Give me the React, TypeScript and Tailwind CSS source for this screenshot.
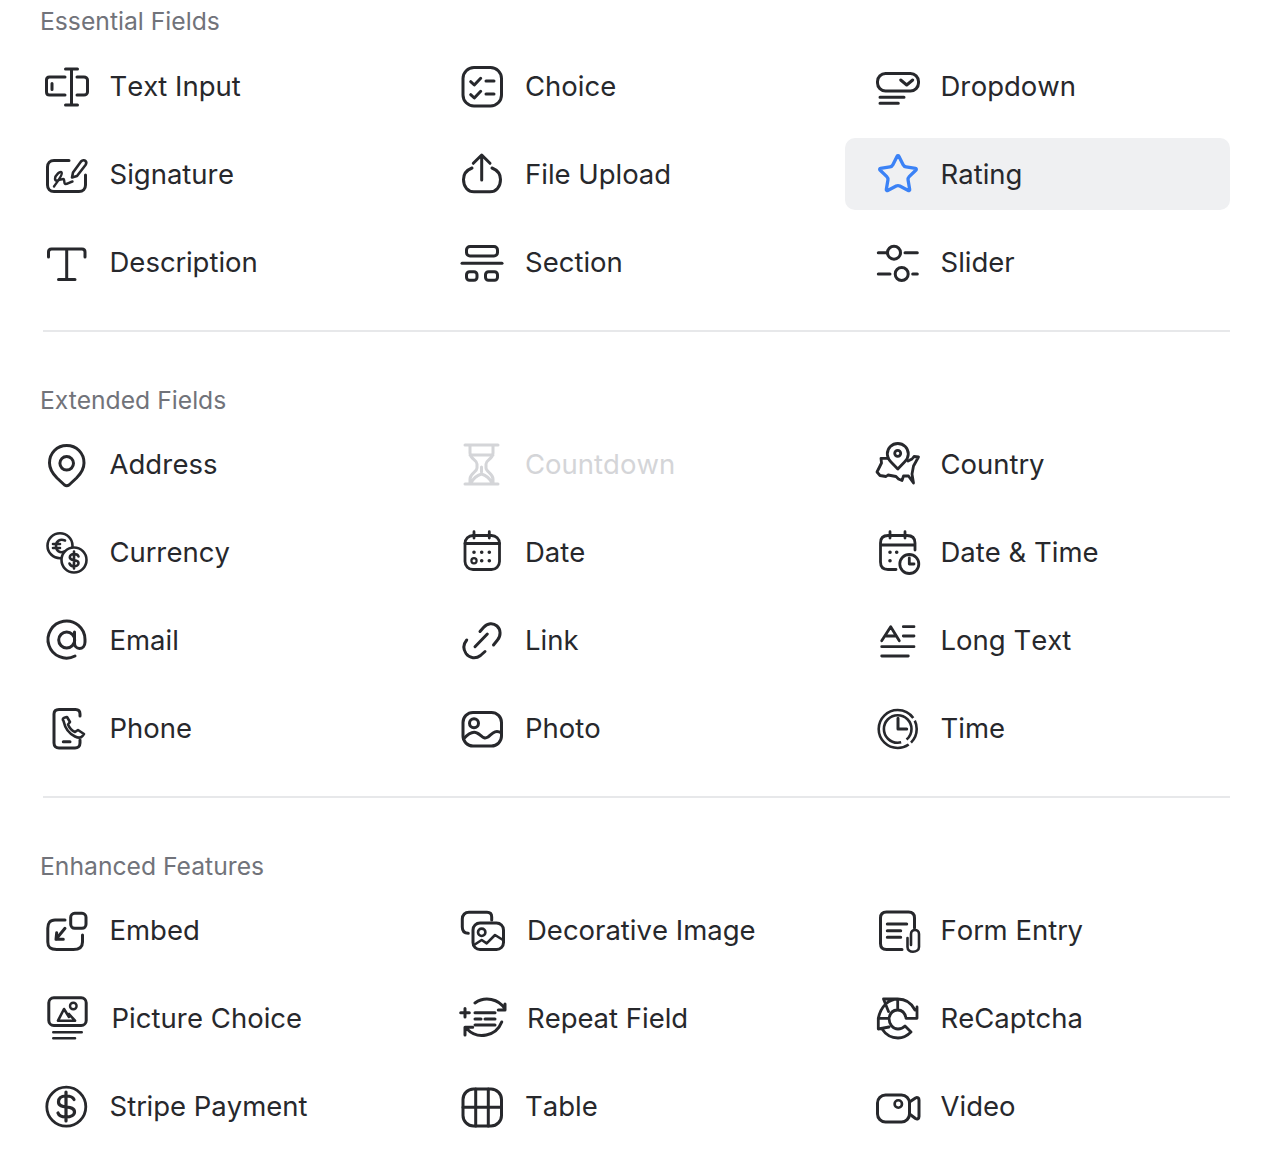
import type { ReactNode } from "react";
import { Star } from "lucide-react";

function Glyph({ children, sw = 3 }: { children: ReactNode; sw?: number }) {
  return (
    <svg
      width="44"
      height="44"
      viewBox="0 0 44 44"
      fill="none"
      stroke="currentColor"
      strokeWidth={sw}
      strokeLinecap="round"
      strokeLinejoin="round"
      className="overflow-visible"
    >
      {children}
    </svg>
  );
}

const icons: Record<string, ReactNode> = {
  textInput: (
    <Glyph>
      <path d="M20 13H4.5C2.5 13 1.5 14.5 1.5 16V28C1.5 29.5 2.5 31 4.5 31H20M32 13H39C41 13 42.5 14.5 42.5 16V28C42.5 29.5 41 31 39 31H32M26.5 5V41M20.5 5H32.5M20.5 41H32.5M7 19.5V25.5" />
    </Glyph>
  ),
  signature: (
    <Glyph>
      <path d="M24 8.5H9C5 8.5 2.5 11 2.5 15V33C2.5 37 5 39.5 9 39.5H34C38 39.5 40.5 37 40.5 33V23" />
      <path d="M28 20.5L36 9.5C37.5 8 39.5 8 40.5 9C41.5 10 41.5 11.5 40.5 13L32 24L27 25.5Z" strokeWidth={2.6} />
      <path d="M9 34.5C12 30 18 23 16.7 20.5C15.5 18.5 10 23 10 27C10 30.5 16 27 18.3 27C20 27 18.5 32 20.5 32C22.5 32 25 30 27.5 29.5" strokeWidth={2.4} />
    </Glyph>
  ),
  description: (
    <Glyph>
      <path d="M3.5 17V12C3.5 10 4.5 9 6.5 9H37C39 9 40 10 40 12V17M21.7 9V39.5M13.5 39.5H30" />
    </Glyph>
  ),
  choice: (
    <Glyph>
      <rect x="3" y="3.5" width="38.5" height="38.5" rx="11" />
      <path d="M10.7 17.7L14.3 21L20.7 14.3M26 17H34M10.7 30.7L14.3 34L20.7 27.3M26 30H34" />
    </Glyph>
  ),
  upload: (
    <Glyph>
      <path d="M21.7 3V28M13.3 11.3L21.7 3L30 11.3" />
      <path d="M12 16C7 18 3.5 22 3.5 27.5C3.5 35 8 39.8 14 39.8H30C36 39.8 40.5 35 40.5 27.5C40.5 22 37 18 32 16" />
    </Glyph>
  ),
  section: (
    <Glyph>
      <rect x="6.5" y="6.5" width="31" height="9.5" rx="3.5" />
      <path d="M2 23.3H42" />
      <rect x="6.5" y="31.7" width="10.5" height="8.5" rx="3" />
      <rect x="25.5" y="31.7" width="12" height="8.5" rx="3" />
    </Glyph>
  ),
  dropdown: (
    <Glyph>
      <rect x="1.5" y="9.5" width="41" height="17.5" rx="8" />
      <path d="M24.7 16L30.7 21L36.7 16M4 33.3H28M4 39.3H22.3" />
    </Glyph>
  ),
  slider: (
    <Glyph>
      <circle cx="18" cy="12.7" r="6.5" />
      <circle cx="25.7" cy="34" r="6.5" />
      <path d="M2.3 12.7H11M29 12.7H41.3M2.3 34H14M36.7 34H41.3" />
    </Glyph>
  ),
  address: (
    <Glyph>
      <path d="M21.7 3.5C12 3.5 4.5 11 4.5 21C4.5 28 8 32 12 36L19.5 43C21 44 22.5 44 24 43L31.5 36C35.5 32 39 28 39 21C39 11 31.5 3.5 21.7 3.5Z" />
      <circle cx="21.7" cy="21.3" r="6.8" />
    </Glyph>
  ),
  currency: (
    <Glyph sw={2.6}>
      <circle cx="15" cy="15.7" r="12.5" />
      <path d="M20 10.5C15 8.5 11 11 11 16C11 21 15 23.5 19.5 21.5M8 14H15M8 18H15" />
      <circle cx="29" cy="30" r="12.5" fill="#fff" />
      <path d="M33.5 26.5C33 24.5 31 24 29 24C26.5 24 24.8 25.5 24.8 27.3C24.8 32 33.5 28.5 33.5 33C33.5 35 31.5 36.3 29 36.3C26.5 36.3 25 35 24.5 33.5M29 21.5V38.5" />
    </Glyph>
  ),
  email: (
    <Glyph>
      <path d="M30 38A18.5 18.5 0 1 1 40 21.5V24C40 28 37.5 30.5 34.5 30.5C31.5 30.5 29.5 28 29.5 25V14" />
      <circle cx="21.7" cy="22" r="8" />
    </Glyph>
  ),
  phone: (
    <Glyph>
      <path d="M35 10V8C35 5 33 3.5 30.5 3.5H14C11 3.5 9 5 9 8V37C9 40 11 42 14 42H30C33 42 35 40 35 37V34M18.3 35.7H25" />
      <path d="M18.5 15C17 13.5 18 12 20 11.5L22 11L25 16L23 18.5C24.5 22 27.5 25 30 26L33 24L39 28L37.5 30C36 32 33 32 30 30.5C24 27.5 20 22 18.5 15Z" strokeWidth={2.6} />
    </Glyph>
  ),
  countdown: (
    <Glyph>
      <path d="M5 3H38M5 42H38M10 3V11C10 17 17 18 17 22V26C17 30 10 31 10 37V42M33 3V11C33 17 26 18 26 22V26C26 30 33 31 33 37V42M10 13H33M11 41C14 35 18 33 21.5 32C25 33 29 35 32 41M21.5 25V30" />
    </Glyph>
  ),
  date: (
    <Glyph sw={2.8}>
      <rect x="5" y="5.5" width="34.5" height="34" rx="8" />
      <path d="M14 1.7V8M29.3 1.7V8M5 13.5H39.5" />
      <path d="M14 22.3H14.01M21.7 22.3H21.71M29.3 22.3H29.31M21.7 30.7H21.71M29.3 30.7H29.31" strokeWidth={3.6} />
      <circle cx="14" cy="30.7" r="2.6" strokeWidth={2.2} />
    </Glyph>
  ),
  link: (
    <Glyph>
      <path d="M15 28.7L27.3 16M20 13.5L23.5 9.5C27.5 5 33 4.5 37 8C41 11.5 41 18 37.5 22L33.5 27M6.7 22C3.5 26 3 31 6 35.5C9.5 40.5 16 41 20.5 37.5L25 33.5" />
    </Glyph>
  ),
  photo: (
    <Glyph>
      <rect x="3" y="6.5" width="38.5" height="33.5" rx="10" />
      <circle cx="14" cy="17.3" r="4.5" />
      <path d="M3.5 33C8 28 13 25 17 27C22 29 23 34 28 31C32 28 35 23 41.5 27" />
    </Glyph>
  ),
  country: (
    <Glyph sw={2.8}>
      <path d="M21.8 27L15 20C12.5 17.5 11.3 15 11.3 12C11.3 6 16 1.5 21.8 1.5C27.6 1.5 32.3 6 32.3 12C32.3 15 31 17.5 28.5 20Z" />
      <circle cx="21.7" cy="11.3" r="3" />
      <path d="M12.3 16.3H5L5.5 21L1 30L4 33.5L10 34.5L12 33L20 34.5L22.5 37L26 38.5L27.5 34L32.5 34L37.5 41L36 32L37.5 24L42.5 15L38 14.5L36 17L32 19" />
    </Glyph>
  ),
  dateTime: (
    <Glyph sw={2.8}>
      <path d="M39 20V13C39 8 36 5.5 31 5.5H12C7 5.5 4.5 8 4.5 13V32C4.5 37 7 39.5 12 39.5H20M14 1.7V8M29 1.7V8M4.5 15H39" />
      <path d="M14 22.3H14.01M20.7 22.3H20.71M14 30.7H14.01" strokeWidth={3.6} />
      <circle cx="33.3" cy="34" r="9.5" />
      <path d="M33.3 28V34H38" />
    </Glyph>
  ),
  longText: (
    <Glyph sw={2.8}>
      <path d="M5.7 22.7L14.7 8.7L23.3 22.7M9 18H20M27.3 8.7H38M27.3 18H38M5.7 28.7H38M5.7 38H32.3" />
    </Glyph>
  ),
  time: (
    <Glyph>
      <circle cx="21.7" cy="23" r="19" strokeDasharray="15 3 89 3 9.4 0" strokeWidth={2.6} strokeLinecap="butt" />
      <circle cx="21.7" cy="23" r="13.8" strokeDasharray="12 6 68.7" strokeWidth={2.6} strokeLinecap="butt" />
      <path d="M22 12.3V23H30.7" />
    </Glyph>
  ),
  embed: (
    <Glyph>
      <rect x="25.7" y="5.3" width="15.3" height="15" rx="4" />
      <path d="M20 12H10C5 12 2.8 15 2.8 20.3V34C2.8 39 5 41.5 11.7 41.5H28.3C34 41.5 37.5 39 37.5 34V27M20 20.3L11 31.3M11.7 24.7L11 31.3H18.3" />
    </Glyph>
  ),
  pictureChoice: (
    <Glyph>
      <rect x="3.8" y="1.8" width="37.4" height="27.7" rx="5" />
      <path d="M13 24.7L19 13L24 21M24 18L30 24.7H13M8.3 36.3H36.7M8.3 42.3H30" strokeWidth={2.6} />
      <circle cx="28.3" cy="10" r="3.3" strokeWidth={2.4} />
    </Glyph>
  ),
  stripe: (
    <Glyph sw={2.8}>
      <circle cx="21.3" cy="22.7" r="19.5" />
      <path d="M29 15.5C28 13 25 12 21 12C16 12 13.5 14.5 13.5 18C13.5 26 29.5 20 29.5 28C29.5 31 26 33 21 33C17 33 14 32 13 29M21 8V37" strokeWidth={3.2} />
    </Glyph>
  ),
  decorative: (
    <Glyph>
      <path d="M31.7 12V9C31.7 6 30 4.3 27 4.3H9C5 4.3 2.3 7 2.3 11V19C2.3 23 4 25.3 8.3 25.3" />
      <rect x="13" y="15" width="30.5" height="26.5" rx="7" />
      <circle cx="21.7" cy="24.3" r="3.7" strokeWidth={2.6} />
      <path d="M14 37L21.7 32L26.7 35.3L35 27L43 32" strokeWidth={2.6} />
    </Glyph>
  ),
  repeat: (
    <Glyph>
      <path d="M15 7A21 21 0 0 1 45 13M38.3 14H45V8M41.7 26A21 21 0 0 1 7 33M5 39V31.3H12.7M5 12.4V21M.7 16.7H9.3M15 16.7H35M15 23H21M25 23H35M15 29H35" />
    </Glyph>
  ),
  table: (
    <Glyph>
      <rect x="3" y="5" width="38.5" height="37" rx="10.5" />
      <path d="M15.7 5V42M28.3 5V42M3 23.3H41.5" />
    </Glyph>
  ),
  formEntry: (
    <Glyph>
      <path d="M38.5 20V10C38.5 6 36.5 4 32.5 4H10.5C6.5 4 4.5 6 4.5 10V35.5C4.5 39.5 6.5 41.5 10.5 41.5H26M11.3 16H30.7M11.3 22.7H24.7M11.3 29.3H24.7" />
      <path d="M31.5 30V39C31.5 42 34 43.7 37 43.7C40 43.7 43 42 43 39V26C43 23.5 41 22 39 22C37 22 35 23.5 35 26V37" strokeWidth={2.6} />
    </Glyph>
  ),
  recaptcha: (
    <Glyph sw={2.8}>
      <path d="M2.3 22.3H13M21.7 3V14M21.7 3C30 3 36 8 39 14M41 11V22.3H30M30 22C29 17 26 14 21.7 14C17 14 14 17 13 22.3M21.7 3C13 3 5 10 2.3 22.3M7.5 3H21.7M7.5 3L12.5 15.5M2.3 22.3V33L13 31M13 22.3C13 28 17 33 22 33C25 33 27 32 29 30L35 36C31 40 27 42 22 42C15 42 10 39 6 33" />
    </Glyph>
  ),
  video: (
    <Glyph>
      <rect x="1.5" y="11" width="32" height="27" rx="8" />
      <path d="M33.5 18L39.5 14C41.5 13 43 14 43 16V32.5C43 34.5 41.5 35.5 39.5 34.5L33.5 30" />
      <circle cx="22.3" cy="20" r="3.7" strokeWidth={2.6} />
    </Glyph>
  ),
};

type Field = { label: string; icon: string; wide?: boolean; active?: boolean; disabled?: boolean };

function FieldRow({ label, icon, wide, active, disabled }: Field) {
  return (
    <div
      className={`flex h-[72px] items-center gap-[21px] rounded-[10px] pl-[30.5px] ${active ? "bg-[#eff0f2]" : ""} ${disabled ? "text-[#d4d5d8]" : "text-[#27282c]"}`}
    >
      <span className={`flex shrink-0 ${wide ? "w-[46px]" : "w-[44px]"}`}>
        {active ? <Star size={44} strokeWidth={1.8} className="text-[#3b82f6]" /> : icons[icon]}
      </span>
      <span className="text-[27.5px] leading-9 [font-kerning:none]">{label}</span>
    </div>
  );
}

function Group({ title, fields, first }: { title: string; fields: Field[]; first?: boolean }) {
  return (
    <section className={first ? "pt-[5px]" : "pt-[52px]"}>
      <h3 className={`h-8 pl-10 text-[24.7px] leading-8 text-[#71737a] ${first ? "mb-[13px]" : "mb-3"}`}>{title}</h3>
      <div className="ml-[14px] mr-9 grid grid-cols-3 gap-x-[30.5px] gap-y-4">
        {fields.map((f) => (
          <FieldRow key={f.label} {...f} />
        ))}
      </div>
    </section>
  );
}

export default function App() {
  return (
    <div className="h-[1154px] w-full overflow-hidden bg-white" style={{ fontFamily: "Inter, 'Liberation Sans', sans-serif" }}>
      <Group
        first
        title="Essential Fields"
        fields={[
          { label: "Text Input", icon: "textInput" },
          { label: "Choice", icon: "choice" },
          { label: "Dropdown", icon: "dropdown" },
          { label: "Signature", icon: "signature" },
          { label: "File Upload", icon: "upload" },
          { label: "Rating", icon: "rating", active: true },
          { label: "Description", icon: "description" },
          { label: "Section", icon: "section" },
          { label: "Slider", icon: "slider" },
        ]}
      />
      <hr className="ml-[43px] mr-9 mt-8 border-t-2 border-[#e7e8ea]" />
      <Group
        title="Extended Fields"
        fields={[
          { label: "Address", icon: "address" },
          { label: "Countdown", icon: "countdown", disabled: true },
          { label: "Country", icon: "country" },
          { label: "Currency", icon: "currency" },
          { label: "Date", icon: "date" },
          { label: "Date & Time", icon: "dateTime" },
          { label: "Email", icon: "email" },
          { label: "Link", icon: "link" },
          { label: "Long Text", icon: "longText" },
          { label: "Phone", icon: "phone" },
          { label: "Photo", icon: "photo" },
          { label: "Time", icon: "time" },
        ]}
      />
      <hr className="ml-[43px] mr-9 mt-8 border-t-2 border-[#e7e8ea]" />
      <Group
        title="Enhanced Features"
        fields={[
          { label: "Embed", icon: "embed" },
          { label: "Decorative Image", icon: "decorative", wide: true },
          { label: "Form Entry", icon: "formEntry" },
          { label: "Picture Choice", icon: "pictureChoice", wide: true },
          { label: "Repeat Field", icon: "repeat", wide: true },
          { label: "ReCaptcha", icon: "recaptcha" },
          { label: "Stripe Payment", icon: "stripe" },
          { label: "Table", icon: "table" },
          { label: "Video", icon: "video" },
        ]}
      />
    </div>
  );
}
